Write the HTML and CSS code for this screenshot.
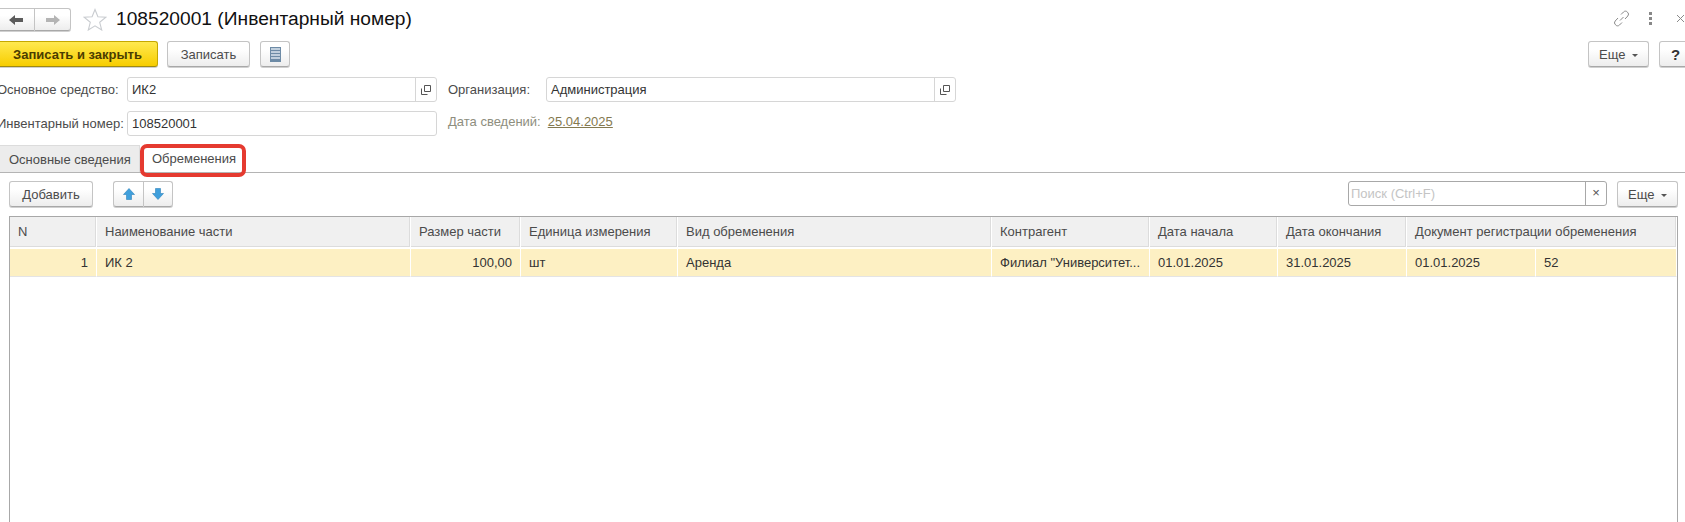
FILE: index.html
```html
<!DOCTYPE html>
<html lang="ru">
<head>
    <meta charset="UTF-8">
    <title>108520001 (Инвентарный номер)</title>
    <link rel="stylesheet" href="styles.css">
</head>
<body>
    <div class="page">
        <div class="header">
            <div class="btn-group nav-group">
                <button class="btn nav-btn">
                    <svg width="16" height="12" viewBox="0 0 16 12"><path d="M1 6 7 1v3h8v4H7v3z" fill="#5c5c5c"/></svg>
                </button>
                <button class="btn nav-btn">
                    <svg width="16" height="12" viewBox="0 0 16 12"><path d="M15 6 9 1v3H1v4h8v3z" fill="#b4b4b4"/></svg>
                </button>
            </div>
            <svg class="star" width="24" height="23" viewBox="0 0 24 23"><path d="M12 1.5l2.9 7.3 8 .5-6.2 5 2 7.7L12 17.8l-6.7 4.2 2-7.7-6.2-5 8-.5z" fill="#fff" stroke="#c9ccd0" stroke-width="1.1"/></svg>
            <h1 class="title">108520001 (Инвентарный номер)</h1>
            <div class="header-icons">
                <svg width="17" height="17" viewBox="0 0 17 17" fill="none" stroke="#8a8a8a" stroke-width="1"><path d="M7 10.5l3.5-3.5"/><path d="M8 4.5l2.5-2.5a2.6 2.6 0 0 1 4 .2 2.7 2.7 0 0 1 .3 3.8L12 9"/><path d="M9 12.5 6.5 15a2.6 2.6 0 0 1-4-.2 2.7 2.7 0 0 1-.3-3.8L5 8"/></svg>
                <span class="dots"><i></i><i></i><i></i></span>
                <svg class="close" width="9" height="9" viewBox="0 0 9 9" stroke="#8a8a8a" stroke-width="1"><path d="M1 1l7 7M8 1 1 8"/></svg>
            </div>
        </div>

        <div class="actions">
            <button class="btn btn-primary">Записать и закрыть</button>
            <button class="btn btn-write">Записать</button>
            <button class="btn btn-icon">
                <svg width="11" height="15" viewBox="0 0 11 15"><rect width="11" height="15" fill="#6d8ba6"/><path d="M1 2h9M1 5h9M1 8h9M1 11h9" stroke="#dbe6ef" stroke-width="1.4"/></svg>
            </button>
            <div class="spacer"></div>
            <button class="btn btn-more">Еще <span class="caret"></span></button>
            <button class="btn btn-help">?</button>
        </div>

        <div class="field-row">
            <label class="field-label">Основное средство:</label>
            <div class="input input-main">
                <span class="input-text">ИК2</span>
                <span class="picker"><svg width="10" height="10" viewBox="0 0 10 10" fill="none" stroke="#555"><path d="M3.5 .5h6v6h-6z"/><path d="M.5 3.5v6h6"/></svg></span>
            </div>
            <label class="field-label-2">Организация:</label>
            <div class="input input-org">
                <span class="input-text">Администрация</span>
                <span class="picker"><svg width="10" height="10" viewBox="0 0 10 10" fill="none" stroke="#555"><path d="M3.5 .5h6v6h-6z"/><path d="M.5 3.5v6h6"/></svg></span>
            </div>
        </div>
        <div class="field-row field-row-2">
            <label class="field-label">Инвентарный номер:</label>
            <div class="input input-main">
                <span class="input-text">108520001</span>
            </div>
            <span class="field-label-2 date-label">Дата сведений:</span>
            <a class="date-link" href="#">25.04.2025</a>
        </div>

        <div class="tabs">
            <div class="tab tab-off">Основные сведения</div>
            <div class="tab tab-on">Обременения</div>
        </div>

        <div class="toolbar">
            <button class="btn btn-add">Добавить</button>
            <div class="btn-group arrows">
                <button class="btn arrow-btn">
                    <svg width="12" height="12" viewBox="0 0 12 12"><path d="M6 .5 11.5 6.5H8.5v5h-5v-5H.5z" fill="#3f9fdc" stroke="#2d82bb" stroke-width=".6"/></svg>
                </button>
                <button class="btn arrow-btn">
                    <svg width="12" height="12" viewBox="0 0 12 12"><path d="M6 11.5 11.5 5.5H8.5v-5h-5v5H.5z" fill="#3f9fdc" stroke="#2d82bb" stroke-width=".6"/></svg>
                </button>
            </div>
            <div class="spacer"></div>
            <div class="search">
                <span class="search-text">Поиск (Ctrl+F)</span>
                <span class="search-clear">×</span>
            </div>
            <button class="btn btn-more">Еще <span class="caret"></span></button>
        </div>

        <div class="grid">
            <table>
                <colgroup>
                    <col class="c-n"><col class="c-name"><col class="c-size"><col class="c-unit"><col class="c-type">
                    <col class="c-agent"><col class="c-start"><col class="c-end"><col class="c-doc1"><col class="c-doc2">
                </colgroup>
                <thead>
                    <tr>
                        <th>N</th>
                        <th>Наименование части</th>
                        <th>Размер части</th>
                        <th>Единица измерения</th>
                        <th>Вид обременения</th>
                        <th>Контрагент</th>
                        <th>Дата начала</th>
                        <th>Дата окончания</th>
                        <th colspan="2">Документ регистрации обременения</th>
                    </tr>
                </thead>
                <tbody>
                    <tr>
                        <td class="num">1</td>
                        <td>ИК 2</td>
                        <td class="num">100,00</td>
                        <td>шт</td>
                        <td>Аренда</td>
                        <td>Филиал "Университет...</td>
                        <td>01.01.2025</td>
                        <td>31.01.2025</td>
                        <td>01.01.2025</td>
                        <td>52</td>
                    </tr>
                </tbody>
            </table>
        </div>
    </div>
</body>
</html>
```

FILE: styles.css
```css
html, body {
    margin: 0;
    height: 522px;
    overflow: hidden;
    background: #fff;
}
body {
    font-family: 'Liberation Sans', Arial, sans-serif;
    font-size: 13px;
    color: #4b4b4b;
}
.page {
    width: 1695px;
    height: 522px;
    margin-left: -3px;
    display: flex;
    flex-direction: column;
}
.spacer {
    flex: 1;
}

/* buttons */
.btn {
    box-sizing: border-box;
    height: 26px;
    padding: 0;
    font: inherit;
    color: #4b4b4b;
    background: linear-gradient(#fff 30%, #ededed);
    border: 1px solid #c4c4c4;
    border-bottom-color: #a8a8a8;
    border-radius: 3px;
    box-shadow: 0 1px 0 #d0d0d0;
}
.btn-group {
    display: flex;
}
.btn-group .btn:first-child {
    border-radius: 3px 0 0 3px;
    border-right: 0;
}
.btn-group .btn:last-child {
    border-radius: 0 3px 3px 0;
}
.btn svg {
    display: block;
    margin: 0 auto;
}

/* header */
.header {
    height: 41px;
    display: flex;
    align-items: flex-start;
}
.nav-group {
    margin-top: 8px;
}
.nav-btn {
    height: 23px;
    width: 37px;
}
.star {
    margin: 8px 0 0 12px;
}
.title {
    margin: 7px 0 0 9px;
    font-size: 19.2px;
    line-height: 24px;
    font-weight: normal;
    color: #111;
}
.header-icons {
    margin-left: auto;
    padding-top: 10px;
    width: 79px;
    display: flex;
    align-items: center;
}
.dots {
    margin-left: 19px;
    display: flex;
    flex-direction: column;
    gap: 2px;
}
.dots i {
    width: 3px;
    height: 3px;
    background: #888;
}
.close {
    margin-left: 24px;
}

/* top actions */
.actions {
    height: 26px;
    display: flex;
}
.btn-primary {
    width: 161px;
    font-weight: bold;
    color: #4a3c00;
    background: linear-gradient(#ffe94f, #f7cd00);
    border-color: #c5a800;
    border-bottom-color: #a08a10;
}
.btn-write {
    width: 83px;
    margin-left: 9px;
}
.btn-icon {
    width: 30px;
    margin-left: 10px;
}
.btn-more {
    width: 61px;
}
.btn-help {
    width: 33px;
    margin-left: 10px;
    font-weight: bold;
    font-size: 15px;
    color: #333;
}
.caret {
    display: inline-block;
    margin-left: 3px;
    vertical-align: 2px;
    border: 3px solid transparent;
    border-top-color: #555;
    border-bottom: 0;
}

/* fields */
.field-row {
    margin-top: 10px;
    height: 25px;
    display: flex;
    align-items: center;
}
.field-row-2 {
    margin-top: 9px;
}
.field-label {
    width: 130px;
    white-space: nowrap;
}
.field-label-2 {
    width: 98px;
    margin-left: 11px;
}
.input {
    box-sizing: border-box;
    height: 25px;
    display: flex;
    align-items: center;
    background: #fff;
    border: 1px solid #d6d6d6;
    border-radius: 3px;
}
.input-main {
    width: 310px;
}
.input-org {
    width: 410px;
}
.input-text {
    flex: 1;
    padding-left: 4px;
    color: #333;
}
.picker {
    width: 20px;
    height: 23px;
    display: flex;
    align-items: center;
    justify-content: center;
    border-left: 1px solid #d6d6d6;
}
.date-label {
    color: #8e8e7e;
    margin-top: -4px;
    width: auto;
}
.date-link {
    margin: -4px 0 0 7px;
    color: #84794f;
}

/* tabs */
.tabs {
    margin-top: 9px;
    height: 27px;
    display: flex;
    border-bottom: 1px solid #b4b4b4;
}
.tab {
    box-sizing: border-box;
    height: 27px;
    line-height: 28px;
    color: #4b4b4b;
}
.tab-off {
    width: 143px;
    padding-left: 11px;
    background: #ececec;
    border: 1px solid #dcdcdc;
    border-bottom: 0;
}
.tab-on {
    position: relative;
    width: 106px;
    padding-left: 12px;
    background: #fff;
}
/* red marker drawn over the screenshot */
.tab-on::after {
    content: "";
    position: absolute;
    left: 0;
    top: -1px;
    width: 106px;
    height: 33px;
    box-sizing: border-box;
    border: 4px solid #e53a30;
    border-radius: 7px;
}

/* table toolbar */
.toolbar {
    margin-top: 8px;
    height: 26px;
    padding: 0 14px 0 12px;
    display: flex;
}
.btn-add {
    width: 84px;
}
.arrows {
    margin-left: 20px;
}
.arrow-btn {
    width: 30px;
}
.search {
    box-sizing: border-box;
    width: 259px;
    height: 25px;
    margin-right: 10px;
    display: flex;
    align-items: center;
    border: 1px solid #a8a8a8;
    border-radius: 3px;
}
.search-text {
    flex: 1;
    padding-left: 2px;
    color: #c4c4c4;
}
.search-clear {
    width: 20px;
    height: 23px;
    line-height: 22px;
    text-align: center;
    color: #555;
    border-left: 1px solid #a8a8a8;
}

/* grid */
.grid {
    box-sizing: border-box;
    flex: 1;
    margin: 9px 14px 0 12px;
    border: 1px solid #a8a8a8;
    border-bottom: 0;
}
table {
    width: 100%;
    table-layout: fixed;
    border-collapse: separate;
    border-spacing: 0;
}
.c-n { width: 87px; }
.c-name { width: 314px; }
.c-size { width: 110px; }
.c-unit { width: 157px; }
.c-type { width: 314px; }
.c-agent { width: 158px; }
.c-start { width: 128px; }
.c-end { width: 129px; }
.c-doc1 { width: 129px; }
th, td {
    box-sizing: border-box;
    padding: 0 8px;
    text-align: left;
    font-weight: normal;
    white-space: nowrap;
    overflow: hidden;
}
th {
    height: 32px;
    padding-bottom: 2px;
    background: #f0f0f0;
    border-right: 1px solid #fff;
    border-bottom: 2px solid #fff;
    box-shadow: inset -1px -1px 0 #dcdcdc;
}
td {
    height: 28px;
    color: #333;
    background: #fdf0c3;
    border-right: 1px solid #fff;
    border-bottom: 1px solid #e4e4e4;
}
td.num {
    text-align: right;
}
```
